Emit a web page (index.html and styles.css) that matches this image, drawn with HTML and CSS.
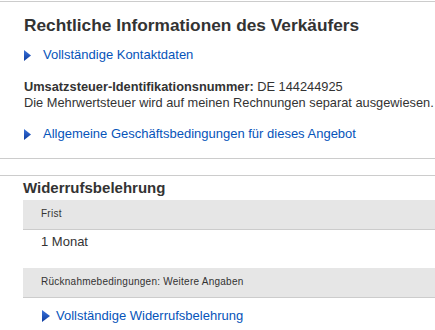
FILE: index.html
```html
<!DOCTYPE html>
<html>
<head>
    <meta charset="utf-8">
    <link rel="stylesheet" href="styles.css">
</head>
<body>
    <svg width="0" height="0" class="defs">
        <defs>
            <linearGradient id="arrowfill" x1="0" y1="0" x2="0" y2="1">
                <stop offset="0" stop-color="#3c74dc"/>
                <stop offset="1" stop-color="#0b3a9e"/>
            </linearGradient>
        </defs>
    </svg>

    <div class="section legal">
        <h2>Rechtliche Informationen des Verkäufers</h2>
        <a class="more" href="#">
            <svg class="arrow" width="7" height="11" viewBox="0 0 7 11"><polygon points="0,0 7,5.5 0,11" fill="url(#arrowfill)"/></svg>
            Vollständige Kontaktdaten
        </a>
        <p class="tax">
            <b>Umsatzsteuer-Identifikationsnummer:</b> DE 144244925<br>
            Die Mehrwertsteuer wird auf meinen Rechnungen separat ausgewiesen.
        </p>
        <a class="more" href="#">
            <svg class="arrow" width="7" height="11" viewBox="0 0 7 11"><polygon points="0,0 7,5.5 0,11" fill="url(#arrowfill)"/></svg>
            Allgemeine Geschäftsbedingungen für dieses Angebot
        </a>
    </div>

    <div class="gap"></div>

    <div class="section returns">
        <h3>Widerrufsbelehrung</h3>
        <div class="row-head">Frist</div>
        <div class="row-value">1 Monat</div>
        <div class="row-head">Rücknahmebedingungen: Weitere Angaben</div>
        <div class="row-value last">
            <a class="more small-gap" href="#">
                <svg class="arrow" width="8" height="12" viewBox="0 0 8 12"><polygon points="0,0 8,6 0,12" fill="url(#arrowfill)"/></svg>
                Vollständige Widerrufsbelehrung
            </a>
        </div>
    </div>
</body>
</html>
```

FILE: styles.css
```css
html, body {
    overflow: hidden;
}

body {
    margin: 0;
    padding-top: 1px;
    font-family: "Liberation Sans", Arial, sans-serif;
    font-size: 13px;
    color: #333;
    background: white;
}

.defs {
    position: absolute;
}

.section {
    border-top: 1px solid #ccc;
}

.legal {
    padding: 13px 0 16px 24px;
    border-bottom: 1px solid #ccc;
}

h2 {
    margin: 0 0 12px;
    font-size: 17.3px;
    line-height: 20px;
}

.more {
    display: flex;
    align-items: center;
    color: #0654ba;
    text-decoration: none;
    font-size: 13px;
    line-height: 16px;
    white-space: nowrap;
}

.arrow {
    flex: none;
    margin-right: 12px;
}

.small-gap .arrow {
    margin-left: 1px;
    margin-right: 6px;
}

.tax {
    margin: 16px 0 15px;
    font-size: 12.8px;
    line-height: 16px;
    white-space: nowrap;
}

.gap {
    height: 16px;
}

.returns {
    padding-left: 23px;
}

h3 {
    margin: 0;
    padding: 3px 0 3px;
    font-size: 15px;
    line-height: 18px;
}

.row-head {
    background: #e6e6e6;
    border-bottom: 1px solid #ccc;
    padding: 8px 0 9px 18px;
    font-size: 10px;
    line-height: 12px;
    letter-spacing: 0.25px;
    white-space: nowrap;
}

.row-value {
    padding: 4px 0 18px 18px;
    line-height: 16px;
}

.row-value.last {
    padding-top: 10px;
}
```
